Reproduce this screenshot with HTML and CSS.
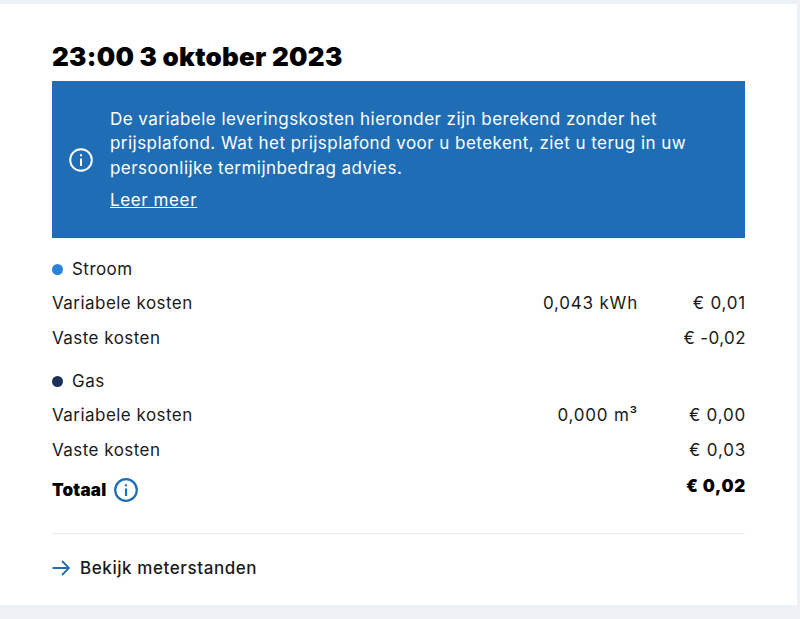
FILE: index.html
```html
<!DOCTYPE html>
<html lang="nl">
<head>
<meta charset="utf-8">
<title>Kosten</title>
<link rel="stylesheet" href="styles.css">
</head>
<body>
<main class="card">
  <h1 class="title">23:00 3 oktober 2023</h1>
  <section class="notice">
    <svg class="notice-icon" viewBox="0 0 24 24" width="24" height="24" fill="none" stroke="#fff" stroke-width="2"><circle cx="12" cy="12" r="10.8"/><path d="M12 10.5v7.5M12 6.2v2" stroke-width="2"/></svg>
    <div class="notice-body">
      <p class="notice-text">De variabele leveringskosten hieronder zijn berekend zonder het prijsplafond. Wat het prijsplafond voor u betekent, ziet u terug in uw persoonlijke termijnbedrag advies.</p>
      <a class="notice-link" href="#">Leer meer</a>
    </div>
  </section>
  <div class="group">
    <div class="legend"><span class="dot dot-power"></span>Stroom</div>
    <div class="row"><span class="label">Variabele kosten</span><span class="qty">0,043 kWh</span><span class="amount">€ 0,01</span></div>
    <div class="row"><span class="label">Vaste kosten</span><span class="amount amount-tight">€ -0,02</span></div>
  </div>
  <div class="group group-gas">
    <div class="legend"><span class="dot dot-gas"></span>Gas</div>
    <div class="row"><span class="label">Variabele kosten</span><span class="qty">0,000 m³</span><span class="amount">€ 0,00</span></div>
    <div class="row"><span class="label">Vaste kosten</span><span class="amount">€ 0,03</span></div>
  </div>
  <div class="total">
    <span class="total-label">Totaal
      <svg class="total-icon" viewBox="0 0 24 24" width="24" height="24" fill="none" stroke="#1f6eb5" stroke-width="2.2"><circle cx="12" cy="12" r="10.8"/><path d="M12 10.5v7.5M12 6.2v2"/></svg>
    </span>
    <span class="total-amount">€ 0,02</span>
  </div>
  <a class="meter-link" href="#">
    <svg class="arrow" viewBox="0 0 18 16" width="18" height="16" fill="none" stroke="#1f6eb5" stroke-width="1.8"><path d="M0.5 8H17M10 1l7 7-7 7"/></svg>
    Bekijk meterstanden
  </a>
</main>
</body>
</html>
```
FILE: styles.css
```css
* { box-sizing: border-box; }
html, body { margin: 0; height: 619px; overflow: hidden; }
body {
  background: #edf0f5;
  padding: 4px 3px 14px 0;
  font-family: "Inter", "Liberation Sans", sans-serif;
  color: #1a1a1a;
  font-size: 17px;
  letter-spacing: 0.46px;
}
.card {
  background: #fff;
  height: 601px;
  padding: 36px 52px 0 52px;
}
.title {
  margin: 0;
  font-size: 26px;
  line-height: 34px;
  font-weight: 900;
  letter-spacing: 0.25px;
  color: #000;
}
.notice {
  margin-top: 7px;
  height: 157px;
  background: #1f6eb5;
  color: #fff;
  display: flex;
  align-items: center;
  padding-left: 17px;
}
.notice-icon { flex: none; margin-right: 17px; }
.notice-body { width: 590px; }
.notice-text { margin: 0; line-height: 24.5px; }
.notice-link { display: inline-block; margin-top: 6.5px; color: #fff; line-height: 26px; letter-spacing: 0.6px; }
.group { margin-top: 14px; }
.group-gas { margin-top: 9px; }
.legend { display: flex; align-items: center; height: 34px; }
.dot { width: 11px; height: 11px; border-radius: 50%; margin-right: 9px; }
.dot-power { background: #2a83d6; }
.dot-gas { background: #1b3157; }
.row { display: flex; align-items: center; height: 34.5px; }
.label { flex: 1; }
.qty { text-align: right; letter-spacing: 0.8px; }
.amount { width: 108px; margin-right: -1px; text-align: right; letter-spacing: 0.8px; }
.amount-tight { letter-spacing: 0.4px; }
.total { display: flex; justify-content: space-between; height: 66px; padding-top: 8px; font-weight: 900; color: #000; }
.total-label { display: flex; align-items: center; gap: 8px; height: 30px; letter-spacing: 0.2px; }
.total-amount { line-height: 22px; letter-spacing: 0.7px; margin-right: -1px; }
.total-icon { flex: none; }
.meter-link {
  display: flex;
  align-items: center;
  gap: 10px;
  border-top: 1px solid #e8eaed;
  padding-top: 17px;
  height: 52px;
  font-weight: 500;
  letter-spacing: 0.58px;
  color: #1a1a1a;
  text-decoration: none;
}
.arrow { flex: none; }
```
